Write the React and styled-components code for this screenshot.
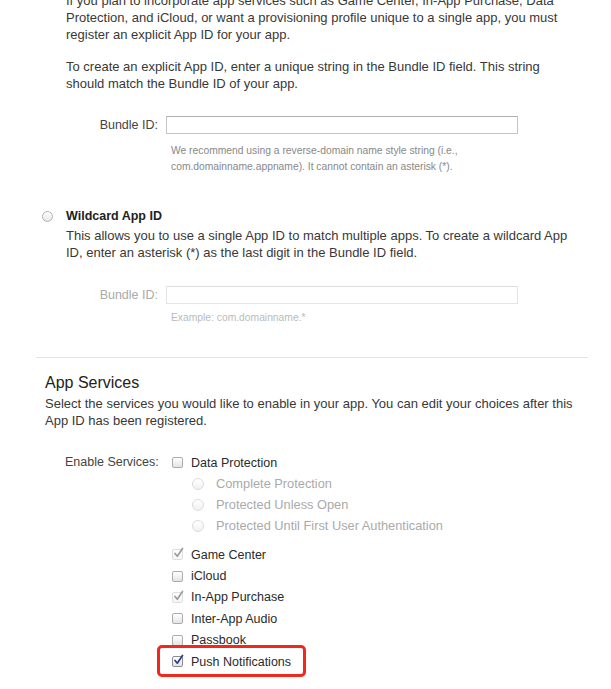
import React from 'react'
import styled, { createGlobalStyle, css } from 'styled-components'

const GlobalStyle = createGlobalStyle`
  html, body {
    margin: 0;
    background: #fff;
    overflow: hidden;
  }
  body {
    font-family: 'Liberation Sans', Arial, sans-serif;
    color: #333;
  }
`

const Page = styled.div`
  width: 552px;
  margin-left: 36px;
  height: 689px;
  overflow: hidden;
`

const Section = styled.div`
  padding-left: ${p => p.indent || 0}px;
`

const Para = styled.p`
  margin: ${p => p.top || 0}px 0 0;
  font-size: 13px;
  line-height: 17px;
  color: #383838;
  white-space: nowrap;
`

const FieldRow = styled.div`
  display: grid;
  grid-template-columns: 92px 352px;
  column-gap: 8px;
  align-items: center;
  margin-top: ${p => p.top || 24}px;
`

const FieldLabel = styled.label`
  text-align: right;
  font-size: 12.5px;
  white-space: nowrap;
  color: ${p => (p.disabled ? '#aaa' : '#444')};
`

const TextInput = styled.div`
  height: 16px;
  border: 1px solid ${p => (p.disabled ? '#e4e4e4' : '#c4c4c4')};
  border-top-color: ${p => (p.disabled ? '#dedede' : '#b0b0b0')};
  background: #fff;
`

const Hint = styled.div`
  margin: ${p => p.top || 9}px 0 0 105px;
  font-size: 10.3px;
  line-height: 16px;
  color: ${p => (p.disabled ? '#bbb' : '#888')};
  white-space: nowrap;
`

const OptionHead = styled.div`
  display: flex;
  align-items: center;
  margin-top: 33px;
  margin-left: -24px;
  gap: 13px;
`

const OptionTitle = styled.span`
  font-size: 12.5px;
  font-weight: bold;
  line-height: 17px;
  color: #222;
`

const Radio = styled.span`
  display: inline-block;
  flex: none;
  width: ${p => p.size || 11}px;
  height: ${p => p.size || 11}px;
  border-radius: 50%;
  box-sizing: border-box;
  border: 1px solid ${p => (p.disabled ? '#dcdcdc' : '#b4b4b4')};
  background: linear-gradient(#ffffff, ${p => (p.disabled ? '#f1f1f1' : '#e6e6e6')});
`

const Divider = styled.hr`
  margin: 31px 0 0;
  border: 0;
  border-top: 1px solid #e4e4e4;
`

const Heading = styled.h2`
  margin: 15px 0 0;
  font-size: 16px;
  font-weight: normal;
  line-height: 20px;
  color: #222;
`

const Services = styled.div`
  display: grid;
  grid-template-columns: 92px 1fr;
  column-gap: 15px;
  margin: 23px 0 0 20px;
`

const ServicesLabel = styled.div`
  text-align: right;
  white-space: nowrap;
  font-size: 12.5px;
  line-height: 21px;
  color: #444;
`

const List = styled.div`
  display: flex;
  flex-direction: column;
`

const Group = styled.div`
  display: flex;
  flex-direction: column;
  margin-top: ${p => p.top || 0}px;
`

const Item = styled.div`
  position: relative;
  display: flex;
  align-items: center;
  align-self: flex-start;
  height: ${p => p.h || 21.4}px;
  padding-left: ${p => (p.sub ? 20 : 0)}px;
  gap: ${p => (p.sub ? 12 : 8)}px;
  font-size: ${p => (p.sub ? 12.8 : 12.5)}px;
  white-space: nowrap;
  color: ${p => (p.disabled ? '#aaa' : '#2a2a2a')};

  ${p => p.highlight && css`
    &::after {
      content: '';
      position: absolute;
      left: -15px;
      right: -15px;
      top: -6px;
      bottom: -5px;
      border: 3px solid #f0281e;
      border-radius: 5px;
    }
  `}
`

const Box = styled.span`
  position: relative;
  flex: none;
  width: 11px;
  height: 11px;
  box-sizing: border-box;
  border-radius: 2px;
  border: 1px solid ${p => (p.faded ? '#dedede' : p.checked ? '#8e8e8e' : '#acacac')};
  background: linear-gradient(#ffffff, ${p => (p.faded ? '#f4f4f4' : '#e4e4e4')});

  svg {
    position: absolute;
    left: 0;
    top: -3px;
  }
`

function Check({ color }) {
  return (
    <svg width="12" height="12" viewBox="0 0 12 12">
      <path d="M2 6.5 L4.3 9.2 L9.5 1.5" fill="none" stroke={color} strokeWidth="1.7" strokeLinecap="round" strokeLinejoin="round" />
    </svg>
  )
}

function Checkbox({ state }) {
  if (state === 'fixed') {
    return <Box faded><Check color="#9c9c9c" /></Box>
  }
  if (state === 'on') {
    return <Box checked><Check color="#25408a" /></Box>
  }
  return <Box />
}

const services = [
  { name: 'Game Center', state: 'fixed' },
  { name: 'iCloud', state: 'off' },
  { name: 'In-App Purchase', state: 'fixed' },
  { name: 'Inter-App Audio', state: 'off' },
  { name: 'Passbook', state: 'off' },
  { name: 'Push Notifications', state: 'on', highlight: true },
]

const protection = [
  'Complete Protection',
  'Protected Unless Open',
  'Protected Until First User Authentication',
]

export default function App() {
  return (
    <>
      <GlobalStyle />
      <Page>
        <Section indent={30}>
          <Para top={-8}>
            If you plan to incorporate app services such as Game Center, In-App Purchase, Data<br />
            Protection, and iCloud, or want a provisioning profile unique to a single app, you must<br />
            register an explicit App ID for your app.
          </Para>
          <Para top={15}>
            To create an explicit App ID, enter a unique string in the Bundle ID field. This string<br />
            should match the Bundle ID of your app.
          </Para>
          <FieldRow>
            <FieldLabel>Bundle ID:</FieldLabel>
            <TextInput />
          </FieldRow>
          <Hint>
            We recommend using a reverse-domain name style string (i.e.,<br />
            com.domainname.appname). It cannot contain an asterisk (*).
          </Hint>

          <OptionHead>
            <Radio />
            <OptionTitle>Wildcard App ID</OptionTitle>
          </OptionHead>
          <Para top={2}>
            This allows you to use a single App ID to match multiple apps. To create a wildcard App<br />
            ID, enter an asterisk (*) as the last digit in the Bundle ID field.
          </Para>
          <FieldRow top={25}>
            <FieldLabel disabled>Bundle ID:</FieldLabel>
            <TextInput disabled />
          </FieldRow>
          <Hint disabled top={6}>Example: com.domainname.*</Hint>
        </Section>

        <Divider />

        <Section indent={9}>
          <Heading>App Services</Heading>
          <Para top={2}>
            Select the services you would like to enable in your app. You can edit your choices after this<br />
            App ID has been registered.
          </Para>
          <Services>
            <ServicesLabel>Enable Services:</ServicesLabel>
            <List>
              <Group>
                <Item h={21}>
                  <Checkbox state="off" />
                  Data Protection
                </Item>
                {protection.map(label => (
                  <Item key={label} h={21} sub disabled>
                    <Radio size={12} disabled />
                    {label}
                  </Item>
                ))}
              </Group>
              <Group top={8}>
                {services.map(s => (
                  <Item key={s.name} highlight={s.highlight}>
                    <Checkbox state={s.state} />
                    {s.name}
                  </Item>
                ))}
              </Group>
            </List>
          </Services>
        </Section>
      </Page>
    </>
  )
}
